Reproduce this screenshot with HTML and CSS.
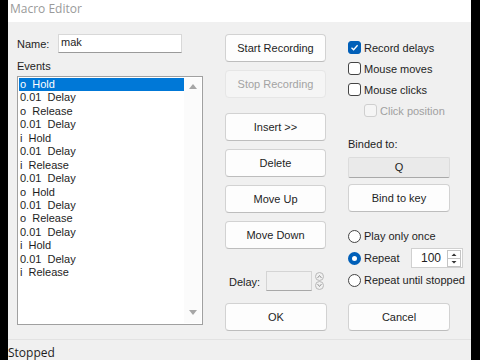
FILE: index.html
```html
<!DOCTYPE html>
<html lang="en">
<head>
  <meta charset="UTF-8">
  <title>Macro Editor</title>
  <link rel="stylesheet" href="styles.css">
</head>
<body>
  <div class="window">
    <div class="title-bar">Macro Editor</div>
    <div class="content">
      <div class="col-left">
        <div class="name-row">
          <span class="label">Name:</span>
          <div class="textbox">mak</div>
        </div>
        <div class="label events-label">Events</div>
        <div class="listbox">
          <div class="items" id="events"></div>
          <div class="scrollbar">
            <span class="arrow up"></span>
            <span class="arrow down"></span>
          </div>
        </div>
      </div>

      <div class="col-mid">
        <button class="btn">Start Recording</button>
        <button class="btn" disabled>Stop Recording</button>
        <button class="btn gap">Insert &gt;&gt;</button>
        <button class="btn">Delete</button>
        <button class="btn">Move Up</button>
        <button class="btn">Move Down</button>
        <div class="delay-row">
          <span class="label">Delay:</span>
          <div class="textbox disabled"></div>
          <div class="round-spin">
            <svg width="11" height="18" viewBox="0 0 11 18">
              <circle cx="5.5" cy="4.5" r="4" fill="none" stroke="#b8b8b8"/>
              <path d="M3.5 6 L5.5 3.5 L7.5 6" fill="none" stroke="#9a9a9a"/>
              <circle cx="5.5" cy="13.5" r="4" fill="none" stroke="#b8b8b8"/>
              <path d="M3.5 12 L5.5 14.5 L7.5 12" fill="none" stroke="#9a9a9a"/>
            </svg>
          </div>
        </div>
        <button class="btn ok">OK</button>
      </div>

      <div class="col-right">
        <label class="check"><span class="box checked">
          <svg width="9" height="9" viewBox="0 0 9 9"><path d="M1.5 4.8 L3.6 6.8 L7.6 2.2" fill="none" stroke="#fff" stroke-width="1.3"/></svg>
        </span>Record delays</label>
        <label class="check"><span class="box"></span>Mouse moves</label>
        <label class="check"><span class="box"></span>Mouse clicks</label>
        <label class="check sub disabled"><span class="box"></span>Click position</label>
        <div class="label binded">Binded to:</div>
        <div class="key">Q</div>
        <button class="btn bind">Bind to key</button>
        <label class="radio"><span class="dot"></span>Play only once</label>
        <div class="repeat-row">
          <label class="radio"><span class="dot on"></span>Repeat</label>
          <div class="numeric">
            <span class="num">100</span>
            <span class="spin">
              <svg width="14" height="17" viewBox="0 0 14 17">
                <rect x="0.5" y="0.5" width="13" height="16" fill="#fff" stroke="#c4c4c4"/>
                <line x1="1" y1="8.5" x2="13" y2="8.5" stroke="#c4c4c4"/>
                <path d="M4.5 6 L7 3.5 L9.5 6 Z" fill="#333"/>
                <path d="M4.5 11 L7 13.5 L9.5 11 Z" fill="#333"/>
              </svg>
            </span>
          </div>
        </div>
        <label class="radio"><span class="dot"></span>Repeat until stopped</label>
        <button class="btn ok">Cancel</button>
      </div>
    </div>
    <div class="status">Stopped</div>
  </div>
  <script>
    const events = [
      'o  Hold', '0.01  Delay', 'o  Release', '0.01  Delay',
      'i  Hold', '0.01  Delay', 'i  Release', '0.01  Delay',
      'o  Hold', '0.01  Delay', 'o  Release', '0.01  Delay',
      'i  Hold', '0.01  Delay', 'i  Release'
    ];
    const list = document.getElementById('events');
    events.forEach((text, i) => {
      const div = document.createElement('div');
      div.className = i === 0 ? 'item selected' : 'item';
      div.textContent = text;
      list.appendChild(div);
    });
  </script>
</body>
</html>
```

FILE: styles.css
```css
body {
  margin: 0;
  background: #000;
  font-family: 'Liberation Sans', Arial, sans-serif;
  font-size: 11px;
  color: #1e1e1e;
}
.window {
  margin-left: 8px;
  width: 463px;
  height: 360px;
  background: #f0f0f0;
  display: flex;
  flex-direction: column;
}
.title-bar {
  height: 22px;
  background: #fff;
  color: #9a9a9a;
  font-family: 'Open Sans', 'Noto Sans', sans-serif;
  font-size: 12px;
  line-height: 17px;
  padding-left: 2px;
}
.content {
  flex: 1;
  display: flex;
  padding: 11px 0 0 9px;
}
.label {
  white-space: nowrap;
}
.col-left {
  width: 186px;
  display: flex;
  flex-direction: column;
}
.name-row {
  display: flex;
  align-items: center;
  height: 20px;
}
.name-row .label {
  width: 41px;
  padding-top: 1px;
}
.textbox {
  width: 120px;
  height: 17px;
  background: #fff;
  border: 1px solid #d8d8d8;
  border-bottom-color: #9a9a9a;
  padding-left: 2px;
  line-height: 14px;
}
.events-label {
  margin-top: 8px;
  height: 11px;
  line-height: 10px;
}
.listbox {
  margin-top: 4px;
  height: 245px;
  border: 1px solid #a0a0a0;
  background: #fff;
  display: flex;
  padding: 1px;
}
.items {
  flex: 1;
}
.item {
  height: 13.45px;
  line-height: 13px;
  padding-left: 1px;
  white-space: pre;
}
.item.selected {
  background: #0078d7;
  color: #fff;
}
.scrollbar {
  width: 17px;
  background: #fbfbfb;
  display: flex;
  flex-direction: column;
  justify-content: space-between;
  align-items: center;
  padding: 6px 0 8px;
}
.arrow {
  width: 0;
  height: 0;
  border-left: 4px solid transparent;
  border-right: 4px solid transparent;
}
.arrow.up {
  border-bottom: 5px solid #a6a6a6;
}
.arrow.down {
  border-top: 5px solid #a6a6a6;
}
.col-mid {
  width: 101px;
  margin-left: 22px;
  padding-top: 1px;
  display: flex;
  flex-direction: column;
}
.btn {
  height: 28px;
  margin-bottom: 8px;
  background: #fdfdfd;
  border: 1px solid #d2d2d2;
  border-bottom-color: #bdbdbd;
  border-radius: 4px;
  font-family: inherit;
  font-size: 11px;
  color: #1e1e1e;
  padding: 0;
}
.btn:disabled {
  background: #f5f5f5;
  border-color: #e6e6e6;
  color: #a3a3a3;
}
.btn.gap {
  margin-top: 7px;
}
.delay-row {
  display: flex;
  align-items: center;
  margin-top: 14px;
  height: 20px;
}
.delay-row .label {
  width: 37px;
  padding-left: 4px;
  padding-top: 1px;
}
.delay-row .textbox {
  width: 44px;
  height: 18px;
  padding: 0;
  background: #f0f0f0;
  border-color: #d4d4d4;
  border-bottom-color: #a8a8a8;
}
.round-spin {
  margin-left: 2px;
  height: 18px;
}
.ok {
  margin-top: 12px;
  width: 102px;
}
.col-right {
  margin-left: 22px;
  width: 118px;
  display: flex;
  flex-direction: column;
}
.check, .radio {
  display: flex;
  align-items: center;
  height: 21px;
  white-space: nowrap;
}
.check:first-child {
  margin-top: 4px;
}
.radio {
  height: 22px;
}
.col-right > .radio:nth-of-type(5) {
  margin-top: 0;
}
.box {
  width: 11px;
  height: 11px;
  border: 1px solid #444;
  border-radius: 3px;
  margin-right: 3px;
  display: flex;
  align-items: center;
  justify-content: center;
  background: #fff;
}
.box.checked {
  background: #005fb8;
  border-color: #005fb8;
}
.check.sub {
  margin-left: 16px;
}
.check.disabled {
  color: #a0a0a0;
}
.check.disabled .box {
  border-color: #cfcfcf;
  background: #f5f5f5;
}
.binded {
  margin-top: 17px;
  height: 14px;
}
.key {
  margin-top: 5px;
  width: 100px;
  height: 19px;
  line-height: 19px;
  text-align: center;
  background: #eaeaea;
  border: 1px solid #dcdcdc;
  border-bottom-color: #a9a9a9;
  border-radius: 2px;
}
.bind {
  margin-top: 6px;
  width: 102px;
  margin-bottom: 13px;
}
.dot {
  width: 11px;
  height: 11px;
  border: 1px solid #444;
  border-radius: 50%;
  margin-right: 3px;
  background: #fff;
  box-sizing: content-box;
}
.dot.on {
  width: 5px;
  height: 5px;
  border: 4px solid #005fb8;
}
.repeat-row {
  display: flex;
  align-items: center;
  height: 22px;
}
.repeat-row .radio {
  width: 63px;
}
.numeric {
  width: 49px;
  height: 18px;
  background: #fff;
  border: 1px solid #d0d0d0;
  display: flex;
  align-items: center;
  justify-content: flex-end;
  padding-right: 1px;
}
.num {
  margin-right: 6px;
  font-size: 12px;
}
.spin {
  height: 17px;
}
.col-right .ok {
  margin-top: 12px;
}
.status {
  height: 20px;
  border-top: 1px solid #e2e2e2;
  font-family: 'Open Sans', 'Noto Sans', sans-serif;
  font-size: 12px;
  line-height: 26px;
  color: #1e1e1e;
}
```
